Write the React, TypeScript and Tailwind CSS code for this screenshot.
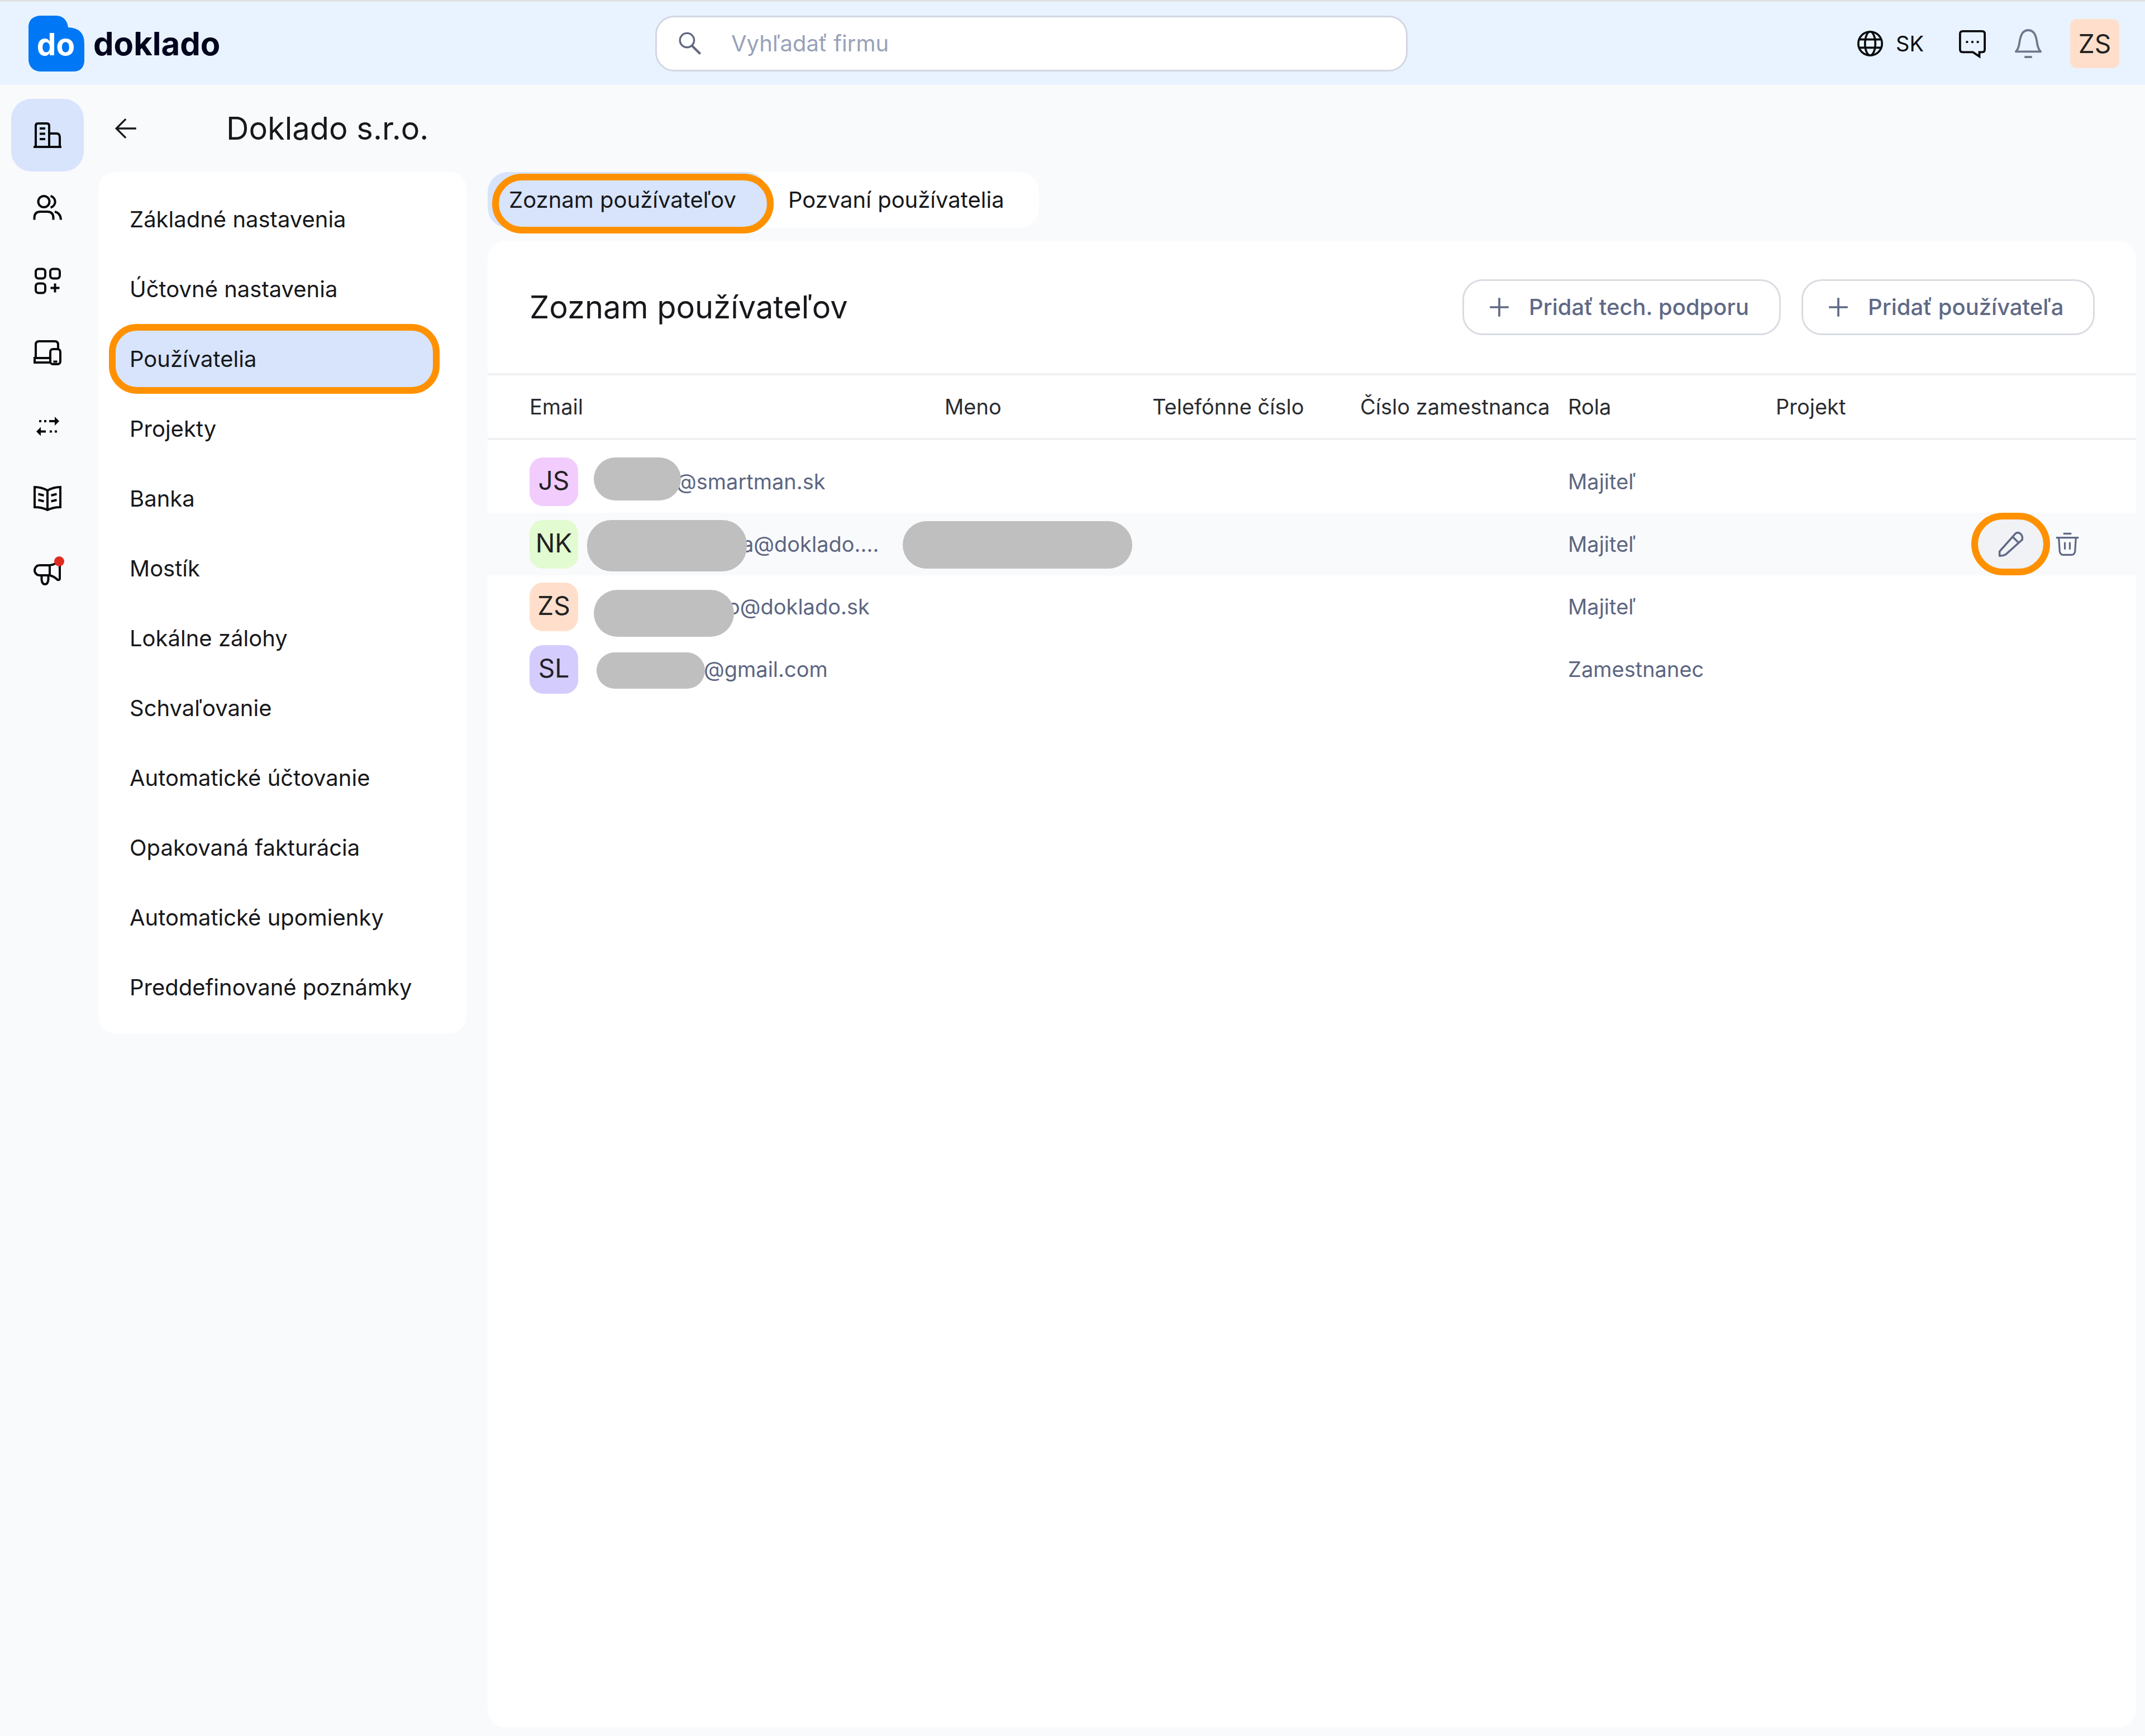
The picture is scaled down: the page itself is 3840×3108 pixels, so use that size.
import React, { useState } from "react";

const settings = [
  "Základné nastavenia",
  "Účtovné nastavenia",
  "Používatelia",
  "Projekty",
  "Banka",
  "Mostík",
  "Lokálne zálohy",
  "Schvaľovanie",
  "Automatické účtovanie",
  "Opakovaná fakturácia",
  "Automatické upomienky",
  "Preddefinované poznámky",
];

const columns = ["Email", "Meno", "Telefónne číslo", "Číslo zamestnanca", "Rola", "Projekt"];

// indent = room taken by the hidden part of the address, mask = the grey cover over it
const users = [
  { initials: "JS", color: "bg-[#f1ccfd]", email: "@smartman.sk", role: "Majiteľ", indent: "pl-[174px]", mask: "left-[115px] top-[13px] h-[77px] w-[156px]" },
  { initials: "NK", color: "bg-[#e2fbd0]", email: "a@doklado....", role: "Majiteľ", indent: "pl-[292px]", mask: "left-[103px] top-[13px] h-[92px] w-[286px]" },
  { initials: "ZS", color: "bg-[#ffdfcb]", email: "o@doklado.sk", role: "Majiteľ", indent: "pl-[266px]", mask: "left-[115px] top-[26px] h-[84px] w-[251px]" },
  { initials: "SL", color: "bg-[#d4ccfd]", email: "@gmail.com", role: "Zamestnanec", indent: "pl-[224px]", mask: "left-[120px] top-[26px] h-[65px] w-[194px]" },
];

function Icon({ children, className = "size-[52px]" }: { children: React.ReactNode; className?: string }) {
  return (
    <svg viewBox="0 0 52 52" className={`overflow-visible ${className}`} fill="none" stroke="currentColor" strokeWidth="4" aria-hidden="true">
      {children}
    </svg>
  );
}

const railItems = [
  {
    label: "Firmy",
    icon: (
      <Icon>
        <path d="M5 47V9q0-4 4-4h16q4 0 4 4v38M29 23h13q6 0 6 7v17M1 47h50" />
        <path d="M12 14h10M12 23.500h10M12 33h10" />
      </Icon>
    ),
  },
  {
    label: "Kontakty",
    icon: (
      <Icon>
        <circle cx="19.500" cy="15" r="10" />
        <path d="M31.500 5a10.500 10.500 0 0 1 0 20.500M2.500 47.500V44q0-11 11-11h12q11 0 11 11v3.500M39 33q10.500 2.500 11 14.500" />
      </Icon>
    ),
  },
  {
    label: "Aplikácie",
    icon: (
      <Icon>
        <rect x="5" y="5.500" width="17" height="17" rx="5" />
        <rect x="31" y="5.500" width="17" height="17" rx="5" />
        <rect x="5" y="31.500" width="17" height="17" rx="5" />
        <path d="M39.500 31.500v16M31.500 39.500h16" />
      </Icon>
    ),
  },
  {
    label: "Zariadenia",
    icon: (
      <Icon>
        <path d="M5 35V11q0-6 6-6h28q6 0 6 6v7M30 35H3v8h27" />
        <rect x="31" y="19" width="18" height="27" rx="5" />
        <path d="M36.500 41.500h7" />
      </Icon>
    ),
  },
  {
    label: "Prevody",
    icon: (
      <Icon>
        <path d="M11 18h4M20 18h4M29 18h12M23 36.500H11M30 36.500h4M39 36.500h4" />
        <path d="M39 10l8 8-8 8zM14 28.500l-8 8 8 8z" fill="currentColor" stroke="none" />
      </Icon>
    ),
  },
  {
    label: "Príručka",
    icon: (
      <Icon>
        <path d="M26 12Q15 6 3 6v36q13 0 23 5 10-5 23-5V6q-12 0-23 6zM26 12v35" />
        <path d="M9.500 18.500l10 2.500M9.500 29l10 2.500M42.500 18.500l-10 2.500M42.500 29l-10 2.500" />
      </Icon>
    ),
  },
  {
    label: "Novinky",
    icon: (
      <Icon>
        <path d="M30 16H12a9 9 0 0 0 0 18h18zM30 16q10-1 16-8 2 0 2 4v28q0 3-4 2-6-6-14-8zM15.500 34v8q1 8 6 8t6-8v-8" />
        <circle cx="47" cy="9" r="9" fill="#e02b20" stroke="none" />
      </Icon>
    ),
  },
];

function Logo() {
  return (
    <a href="#" className="flex w-[1122px] shrink-0 items-center gap-4">
      <svg viewBox="0 0 100 100" className="size-[100px]" aria-hidden="true">
        <path d="M20 0H48Q68 0 71 21Q100 22 100 50V82Q98 100 80 100H20Q2 98 0 80V18Q2 2 20 0Z" fill="#0078f5" />
        <text x="49" y="71" textAnchor="middle" fontFamily="Inter, sans-serif" fontWeight="700" fontSize="55" fill="#fff">
          do
        </text>
      </svg>
      <span className="text-[58px] leading-[72px] font-bold text-[#02031c]">doklado</span>
    </a>
  );
}

function Header() {
  return (
    <header className="flex h-[152px] items-center border-t-[3px] border-[#dfe1e3] bg-[#e9f3ff] pr-[46px] pl-[51px]">
      <Logo />
      <label className="flex h-[100px] w-[36%] shrink-0 items-center gap-[52px] rounded-[34px] border-[3px] border-[#d2d7e0] bg-white pl-[37px]">
        <Icon className="size-[44px] shrink-0 text-[#616880]">
          <circle cx="20" cy="19" r="15" />
          <path d="M30 30l18 18" strokeWidth="5" />
        </Icon>
        <input
          type="search"
          aria-label="Vyhľadať firmu"
          placeholder="Vyhľadať firmu"
          className="w-full bg-transparent text-[40px] leading-[48px] outline-none placeholder:text-[#98a1b8]"
        />
      </label>
      <div className="ml-auto flex items-center gap-[50px] text-[#0b0c10]">
        <button type="button" className="mr-3 flex items-center gap-[22px] text-[38px] leading-[48px]">
          <Icon className="size-[48px]">
            <circle cx="26" cy="26" r="23" />
            <ellipse cx="26" cy="26" rx="10" ry="23" />
            <path d="M5 18h42M5 34h42" />
          </Icon>
          SK
        </button>
        <button type="button" aria-label="Správy">
          <Icon className="size-[50px]">
            <path d="M8 3h36q5 0 5 5v29q0 5-5 5h-5v8l-12-8H8q-5 0-5-5V8q0-5 5-5z" />
            <path d="M14 23h4M24 23h4M34 23h4" />
          </Icon>
        </button>
        <button type="button" aria-label="Upozornenia" className="text-[#70778d]">
          <Icon className="size-[50px]">
            <path d="M3 41h46q-4-4-6-13C41 13 38 1 26 1S11 13 9 28q-2 9-6 13z" strokeLinejoin="round" />
            <path d="M19 51h14" />
          </Icon>
        </button>
        <button type="button" className="size-[88px] rounded-xl bg-[#ffdfcb] text-[46px] leading-[80px] text-[#222]">
          ZS
        </button>
      </div>
    </header>
  );
}

function AddButton({ children, className }: { children: React.ReactNode; className: string }) {
  return (
    <button
      type="button"
      className={`flex h-[100px] items-center gap-[34px] rounded-[36px] border-[3px] border-[#dadce2] bg-white pl-[44px] text-[40px] leading-[48px] font-medium whitespace-nowrap text-[#5f6985] ${className}`}
    >
      <Icon className="size-[38px]">
        <path d="M26 3v46M3 26h46" strokeWidth="5" />
      </Icon>
      {children}
    </button>
  );
}

function UsersTable() {
  return (
    <table className="w-full table-fixed text-left text-[38px] leading-[48px]">
      <colgroup>
        <col className="w-[818px]" />
        <col className="w-[372px]" />
        <col className="w-[372px]" />
        <col className="w-[372px]" />
        <col className="w-[372px]" />
        <col className="w-[340px]" />
        <col />
      </colgroup>
      <thead>
        <tr className="h-[116px] border-y-4 border-[#f0f1f3]">
          {columns.map((name) => (
            <th key={name} className="font-normal whitespace-nowrap text-[#2a2c30] first:pl-[75px]">
              {name}
            </th>
          ))}
          <th aria-label="Akcie" />
        </tr>
      </thead>
      <tbody>
        <tr className="h-5" aria-hidden="true">
          <td colSpan={7} />
        </tr>
        {users.map((user, idx) => (
          <tr key={user.initials} className={idx === 1 ? "h-[112px] bg-[#f9fafc]" : "h-[112px]"}>
            <td className="pl-[75px] text-[#5d6681]">
              <div className="relative flex h-[112px] items-center">
                <span className={`size-[87px] rounded-3xl text-center text-[46px] leading-[82px] text-[#222] ${user.color}`}>
                  {user.initials}
                </span>
                <span className={`absolute left-[88px] ${user.indent}`}>{user.email}</span>
                <span className={`absolute rounded-[44px] bg-[#bfbfbf] ${user.mask}`} />
              </div>
            </td>
            <td>
              {idx === 1 && (
                <div className="relative h-[112px]">
                  <span className="absolute top-[15px] -left-[75px] h-[85px] w-[411px] rounded-[44px] bg-[#bfbfbf]" />
                </div>
              )}
            </td>
            <td />
            <td />
            <td className="text-[#5d6681]">{user.role}</td>
            <td />
            <td>
              {idx === 1 && (
                <div className="flex items-center justify-end gap-[10px] pr-[102px] text-[#5f6985]">
                  <button
                    type="button"
                    aria-label="Upraviť"
                    className="flex h-[112px] w-[141px] shrink-0 items-center justify-center rounded-[56px] border-[12px] border-[#ff9100] bg-[#f0f2f6]"
                  >
                    <Icon className="size-[46px]">
                      <path d="M3 50v-9L35 5q5-4 10 0t4 12L19 44q-5 6-16 6zM30 12l11 11" strokeLinejoin="round" />
                    </Icon>
                  </button>
                  <button type="button" aria-label="Odstrániť">
                    <Icon className="size-[42px]">
                      <path d="M1 12h50M17 3h18M7 12l2 30q1 8 8 8h18q7 0 8-8l2-30M20.500 22v16M31.500 22v16" />
                    </Icon>
                  </button>
                </div>
              )}
            </td>
          </tr>
        ))}
      </tbody>
    </table>
  );
}

export default function App() {
  const [activeSetting, setActiveSetting] = useState("Používatelia");

  return (
    <div className="flex min-h-screen flex-col bg-[#f9fafc] font-['Inter',sans-serif] text-[#17181b]">
      <Header />
      <div className="flex flex-1">
        {/* Icon rail */}
        <nav className="flex w-[176px] shrink-0 flex-col pt-[25px] pl-5">
          {railItems.map((item, idx) => (
            <a
              key={item.label}
              href="#"
              aria-label={item.label}
              className={`flex size-[130px] items-center justify-center rounded-[36px] text-[#08090c] ${idx === 0 ? "bg-[#d7e4fb]" : ""}`}
            >
              {item.icon}
            </a>
          ))}
        </nav>

        <main className="flex min-w-0 flex-1 flex-col pr-4 pb-4">
          <div className="flex h-[156px] items-center gap-[157px] pl-[28px]">
            <button type="button" aria-label="Späť">
              <Icon className="size-[44px]">
                <path d="M47 26H6M25 6L5 26l20 20" />
              </Icon>
            </button>
            <h1 className="text-[56px] leading-[64px]">Doklado s.r.o.</h1>
          </div>

          <div className="flex flex-1 items-stretch gap-[38px]">
            {/* Settings menu */}
            <nav className="w-[659px] shrink-0 self-start rounded-[30px] bg-white pt-[22px] pr-12 pb-5 pl-[19px]">
              {settings.map((name) => (
                <a
                  key={name}
                  href="#"
                  onClick={() => setActiveSetting(name)}
                  className={`flex h-[125px] items-center rounded-[50px] border-[12px] pl-[25px] text-[40px] leading-[48px] whitespace-nowrap ${
                    name === activeSetting ? "border-[#ff9100] bg-[#d7e4fb]" : "border-transparent"
                  }`}
                >
                  {name}
                </a>
              ))}
            </nav>

            <section className="flex min-w-0 flex-1 flex-col">
              {/* Tabs */}
              <div className="flex h-[100px] self-start rounded-[36px] bg-white text-[40px] leading-[48px]">
                <button type="button" className="relative min-w-[500px] rounded-[36px] bg-[#d7e4fb] px-[38px] text-left">
                  Zoznam používateľov
                  <span className="absolute -right-3 -bottom-[10px] left-2 top-[3px] rounded-[54px] border-[12px] border-[#ff9100]" />
                </button>
                <button type="button" className="min-w-[487px] px-[38px] text-left">
                  Pozvaní používatelia
                </button>
              </div>

              <div className="mt-6 flex-1 rounded-[30px] bg-white">
                <div className="flex h-[236px] items-center justify-between pr-[74px] pl-[75px]">
                  <h2 className="text-[56px] leading-[64px]">Zoznam používateľov</h2>
                  <div className="flex gap-[37px]">
                    <AddButton className="min-w-[570px]">Pridať tech. podporu</AddButton>
                    <AddButton className="min-w-[525px]">Pridať používateľa</AddButton>
                  </div>
                </div>
                <UsersTable />
              </div>
            </section>
          </div>
        </main>
      </div>
    </div>
  );
}
